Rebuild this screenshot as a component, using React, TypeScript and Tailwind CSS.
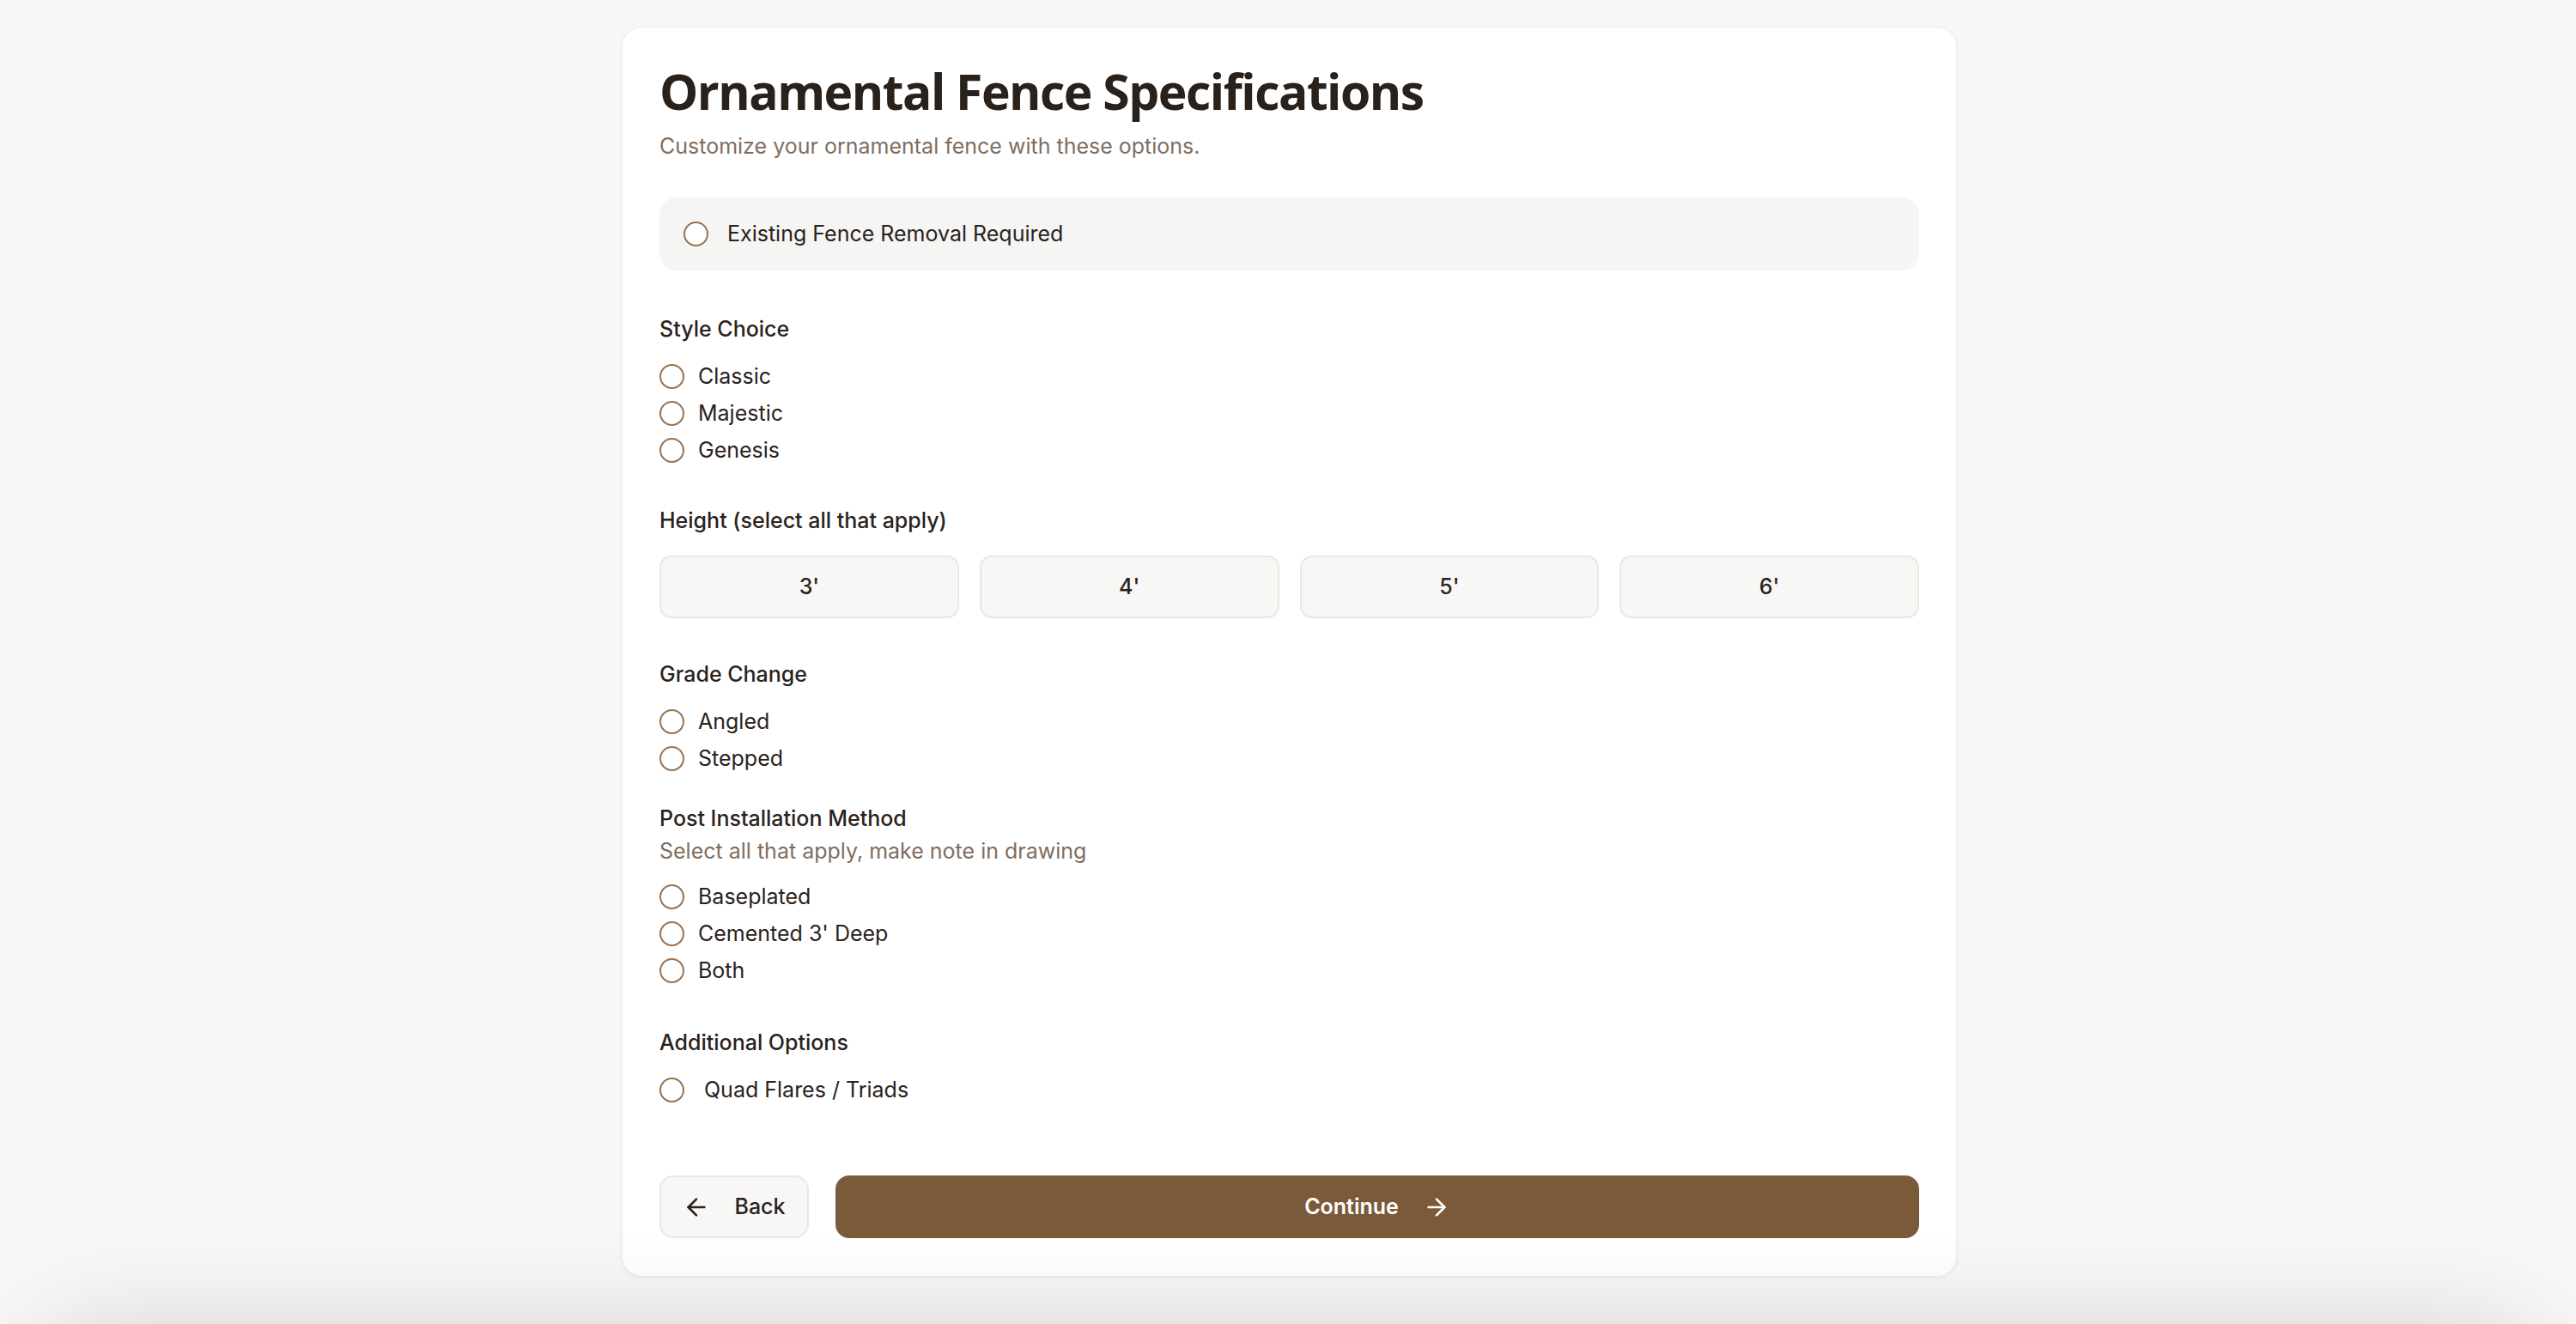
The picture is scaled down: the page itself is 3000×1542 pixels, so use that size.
import React from 'react';
import { ArrowLeft, ArrowRight } from 'lucide-react';

const body = { fontFamily: 'Inter, "Liberation Sans", sans-serif' };
const heading = { fontFamily: '"Open Sans", Inter, sans-serif' };

function Radio({ label, wide = false }: { label: string; wide?: boolean }) {
    return (
        <div className="flex items-center h-[43px]">
            <span className="w-[29px] h-[29px] rounded-full border-2 border-[#9a7250] bg-white shrink-0"></span>
            <span className={`${wide ? 'ml-[23px]' : 'ml-[16px]'} text-[25px] text-[#2a221d]`}>{label}</span>
        </div>
    );
}

function Section({ title, children }: { title: string; children: React.ReactNode }) {
    return (
        <div>
            <h3 className="text-[25px] font-medium text-[#2a221d] leading-[40px]">{title}</h3>
            {children}
        </div>
    );
}

export default function App() {
    const heights = ["3'", "4'", "5'", "6'"];

    return (
        <div className="min-h-screen bg-[#f8f7f5] relative overflow-hidden" style={body}>
            <div className="pt-[31px] pb-[57px] pl-[3px] flex justify-center">
                <div className="w-[1555px] bg-white rounded-[24px] shadow-[0_1px_4px_rgba(0,0,0,0.06)] border border-[#f0eeea] px-[43px] pt-[38px] pb-[44px]">
                    <h1 className="text-[57px] font-bold text-[#2a211b] leading-[72px] tracking-[-1.5px]" style={heading}>
                        Ornamental Fence Specifications
                    </h1>
                    <p className="mt-[8px] text-[25px] text-[#7f6e60] leading-[40px]">
                        Customize your ornamental fence with these options.
                    </p>

                    <div className="mt-[40px] h-[85px] bg-[#f5f5f3] rounded-[20px] flex items-center px-[28px]">
                        <span className="w-[29px] h-[29px] rounded-full border-2 border-[#9a7250] bg-white shrink-0"></span>
                        <span className="ml-[22px] text-[25px] text-[#2a221d]">Existing Fence Removal Required</span>
                    </div>

                    <div className="mt-[48px]">
                        <Section title="Style Choice">
                            <div className="mt-[14px]">
                                <Radio label="Classic" />
                                <Radio label="Majestic" />
                                <Radio label="Genesis" />
                            </div>
                        </Section>
                    </div>

                    <div className="mt-[40px]">
                        <Section title="Height (select all that apply)">
                            <div className="mt-[21px] grid grid-cols-4 gap-[24px]">
                                {heights.map((h) => (
                                    <button
                                        key={h}
                                        className="h-[73px] bg-[#f8f7f5] border-2 border-[#ebe8e3] rounded-[14px] text-[25px] font-medium text-[#2a221d]"
                                    >
                                        {h}
                                    </button>
                                ))}
                            </div>
                        </Section>
                    </div>

                    <div className="mt-[45px]">
                        <Section title="Grade Change">
                            <div className="mt-[14px]">
                                <Radio label="Angled" />
                                <Radio label="Stepped" />
                            </div>
                        </Section>
                    </div>

                    <div className="mt-[28px]">
                        <h3 className="text-[25px] font-medium text-[#2a221d] leading-[40px]">Post Installation Method</h3>
                        <p className="-mt-[2px] text-[25px] text-[#7f6e60] leading-[40px]">Select all that apply, make note in drawing</p>
                        <div className="mt-[12px]">
                            <Radio label="Baseplated" />
                            <Radio label="Cemented 3' Deep" />
                            <Radio label="Both" />
                        </div>
                    </div>

                    <div className="mt-[42px]">
                        <Section title="Additional Options">
                            <div className="mt-[14px]">
                                <Radio label="Quad Flares / Triads" wide />
                            </div>
                        </Section>
                    </div>

                    <div className="mt-[78px] flex gap-[31px]">
                        <button className="w-[174px] h-[73px] bg-[#f8f7f5] border-2 border-[#ebe8e3] rounded-[16px] flex items-center justify-center gap-[28px] text-[25px] font-medium text-[#2a221d]">
                            <ArrowLeft className="w-[32px] h-[32px]" strokeWidth={2} />
                            Back
                        </button>
                        <button className="flex-1 h-[73px] bg-[#7b5a3a] rounded-[16px] flex items-center justify-center gap-[28px] text-[25px] font-semibold text-white">
                            Continue
                            <ArrowRight className="w-[32px] h-[32px]" strokeWidth={2} />
                        </button>
                    </div>
                </div>
            </div>
            <div className="absolute left-[80px] right-[80px] top-[1600px] h-[100px] rounded-full shadow-[0_0_120px_50px_rgba(0,0,0,0.16)]"></div>
        </div>
    );
}
